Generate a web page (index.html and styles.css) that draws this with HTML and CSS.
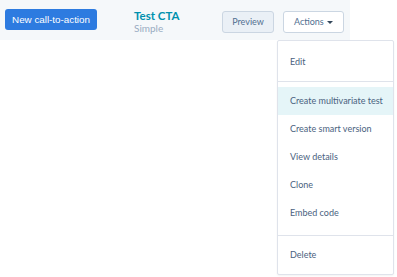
FILE: index.html
```html
<!DOCTYPE html>
<html>
<head>
<meta charset="utf-8">
<link rel="stylesheet" href="styles.css">
</head>
<body>
<div class="page">
  <div class="header">
    <button class="btn-primary">New call-to-action</button>
    <div class="title">
      <div class="name">Test CTA</div>
      <div class="type">Simple</div>
    </div>
    <button class="btn-preview">Preview</button>
    <button class="btn-actions">Actions <span class="caret"></span></button>
  </div>
  <div class="menu">
    <div class="section first">
      <div class="item">Edit</div>
    </div>
    <div class="section middle">
      <div class="item active">Create multivariate test</div>
      <div class="item">Create smart version</div>
      <div class="item">View details</div>
      <div class="item">Clone</div>
      <div class="item">Embed code</div>
    </div>
    <div class="section last">
      <div class="item">Delete</div>
    </div>
  </div>
</div>
</body>
</html>
```
FILE: styles.css
```css
html, body {
  margin: 0;
  padding: 0;
  background: #ffffff;
}
.page {
  position: relative;
  width: 397px;
  height: 277px;
  overflow: hidden;
  font-family: Lato, "Open Sans", sans-serif;
}
.header {
  width: 350px;
  height: 40px;
  background: #f5f8fa;
  display: flex;
  align-items: center;
  box-sizing: border-box;
  padding-left: 5px;
}
.header > * {
  flex-shrink: 0;
}
.btn-primary {
  width: 92px;
  height: 21px;
  margin: 0 0 1px 0;
  padding: 0;
  border: none;
  border-radius: 3px;
  background: #2d7be0;
  color: #ffffff;
  font-family: "Liberation Sans", Arial, sans-serif;
  font-size: 9.8px;
  white-space: nowrap;
}
.title {
  margin-left: 37px;
  width: 50px;
  display: flex;
  flex-direction: column;
  margin-top: 3px;
  white-space: nowrap;
}
.name {
  color: #0091ae;
  font-size: 11.5px;
  font-weight: 700;
  line-height: 13px;
}
.type {
  color: #99acc2;
  font-size: 10px;
  line-height: 12px;
}
.btn-preview {
  margin-left: 38px;
  width: 52px;
  height: 22px;
  padding: 0;
  border: 1px solid #cbd6e2;
  border-radius: 3px;
  background: #eaf0f6;
  color: #516f90;
  font-family: Lato, sans-serif;
  font-size: 9px;
  margin-top: 3px;
}
.btn-actions {
  margin-left: 9px;
  width: 61px;
  height: 22px;
  padding: 0;
  border: 1px solid #cbd6e2;
  border-radius: 3px;
  background: #ffffff;
  color: #516f90;
  font-family: Lato, sans-serif;
  font-size: 9px;
  margin-top: 3px;
}
.caret {
  display: inline-block;
  width: 0;
  height: 0;
  border-left: 3px solid transparent;
  border-right: 3px solid transparent;
  border-top: 3px solid #33475b;
  vertical-align: middle;
  margin-left: 1px;
}
.menu {
  position: absolute;
  left: 277px;
  top: 40px;
  width: 117px;
  background: #ffffff;
  border: 1px solid #dfe3eb;
  border-radius: 2px;
  box-sizing: border-box;
  box-shadow: 0 1px 2px rgba(0,0,0,0.05);
}
.section.first {
  height: 39px;
  display: flex;
  align-items: center;
  border-bottom: 1px solid #dfe3eb;
  padding-top: 1px;
}
.section.middle {
  padding: 5px 0 8px 0;
  border-bottom: 1px solid #dfe3eb;
}
.section.last {
  height: 38px;
  display: flex;
  align-items: center;
}
.item {
  height: 28px;
  line-height: 28px;
  padding-left: 12px;
  color: #4a6280;
  font-size: 9px;
  white-space: nowrap;
  width: 100%;
  box-sizing: border-box;
}
.item.active {
  background: #e5f5f8;
}
```
